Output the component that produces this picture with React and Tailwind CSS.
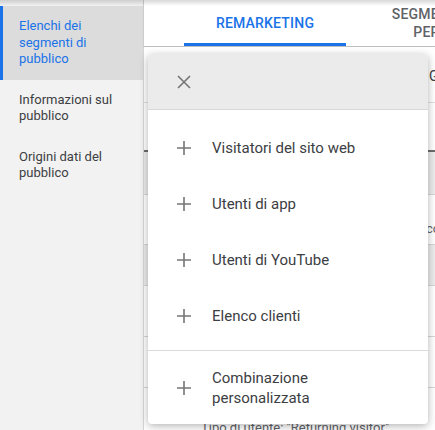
import React from 'react';

const navItems = [
  { label: 'Elenchi dei segmenti di pubblico', active: true },
  { label: 'Informazioni sul pubblico' },
  { label: 'Origini dati del pubblico' },
];

const menuItems = ['Visitatori del sito web', 'Utenti di app', 'Utenti di YouTube', 'Elenco clienti'];

const PlusIcon = () => (
  <svg width="14" height="14" viewBox="0 0 14 14" className="shrink-0">
    <path d="M7 0v14M0 7h14" stroke="#757575" strokeWidth="1.6" fill="none" />
  </svg>
);

const CloseIcon = () => (
  <svg width="14" height="14" viewBox="0 0 14 14">
    <path d="M1 1l12 12M13 1L1 13" stroke="#757575" strokeWidth="1.6" fill="none" />
  </svg>
);

const App = () => {
  return (
    <div className="relative flex h-[430px] w-[435px] overflow-hidden bg-white font-['Roboto',sans-serif]">
      <div className="pointer-events-none absolute inset-x-0 top-0 z-20 h-[6px] bg-linear-to-b from-black/15 to-transparent" />

      {/* sidebar */}
      <div className="w-[144px] shrink-0 border-r border-[#d6d6d6] bg-[#f2f2f2] pt-[6px]">
        {navItems.map((item) => (
          <div
            key={item.label}
            className={`border-l-[3px] py-3 pl-4 pr-3 text-[13px] leading-[16.5px] ${
              item.active ? 'border-[#1a73e8] bg-[#dcdcdc] text-[#1a73e8]' : 'border-transparent text-[#3c4043]'
            }`}
          >
            {item.label}
          </div>
        ))}
      </div>

      {/* main */}
      <div className="relative flex min-w-0 flex-1 flex-col">
        <div className="flex h-[47px] shrink-0 border-b border-[#bdbdbd] bg-white pl-[40px] shadow-[0_1px_2px_rgba(0,0,0,0.12)]">
          <div className="flex w-[162px] shrink-0 items-center justify-center border-b-[3px] border-[#1a73e8] pt-[3px] text-[14px] font-medium tracking-[0.2px] text-[#1a73e8]">
            REMARKETING
          </div>
          <div className="flex w-[250px] shrink-0 items-center justify-center text-center text-[14px] font-medium leading-[18px] tracking-[0.2px] text-[#5f6368]">
            SEGMENTI DI PUBBLICO PERSONALIZZATI
          </div>
        </div>

        {/* table behind the menu */}
        <div className="flex flex-col text-[13px] text-[#5f6368]">
          <div className="flex h-[56px] items-center border-b border-[#e0e0e0] bg-white pl-[285px] pt-[4px] text-[14px] text-[#3c4043]">Gestione</div>
          <div className="h-[49px] border-b-2 border-[#6b6b6b] bg-white" />
          <div className="h-[43px] border-b border-[#d6d6d6] bg-[#ececec]" />
          <div className="flex h-[50px] items-end border-b border-[#d6d6d6] bg-white pb-[6px] pl-[282px]">cookie</div>
          <div className="h-[41px] border-b border-[#d6d6d6] bg-[#ececec]" />
          <div className="h-[51px] border-b border-[#d6d6d6] bg-white" />
          <div className="h-[51px] border-b border-[#d6d6d6] bg-white" />
          <div className="flex h-[44px] items-end bg-white pl-[57px] leading-[16px]">
            <span className="translate-y-[4px]">Tipo di utente: "Returning visitor"</span>
          </div>
        </div>

        {/* add menu */}
        <div className="absolute left-[4px] top-[54px] z-10 w-[280px] overflow-hidden rounded-[4px] bg-white shadow-[0_2px_8px_rgba(0,0,0,0.3)]">
          <div className="flex h-[56px] items-center border-b border-[#d9d9d9] bg-[#ebebeb] pl-[29px]">
            <CloseIcon />
          </div>
          <div className="pb-[6px] pt-[10px]">
            {menuItems.map((label) => (
              <div key={label} className="flex h-[56px] items-center gap-[21px] pl-[29px] text-[15px] text-[#3c4043]">
                <PlusIcon />
                <span>{label}</span>
              </div>
            ))}
          </div>
          <div className="border-t border-[#dadada] py-2">
            <div className="flex h-[57px] items-center gap-[21px] pl-[29px] text-[15px] leading-[20px] text-[#3c4043]">
              <PlusIcon />
              <span>
                Combinazione
                <br />
                personalizzata
              </span>
            </div>
          </div>
        </div>
      </div>
    </div>
  );
};

export default App;
